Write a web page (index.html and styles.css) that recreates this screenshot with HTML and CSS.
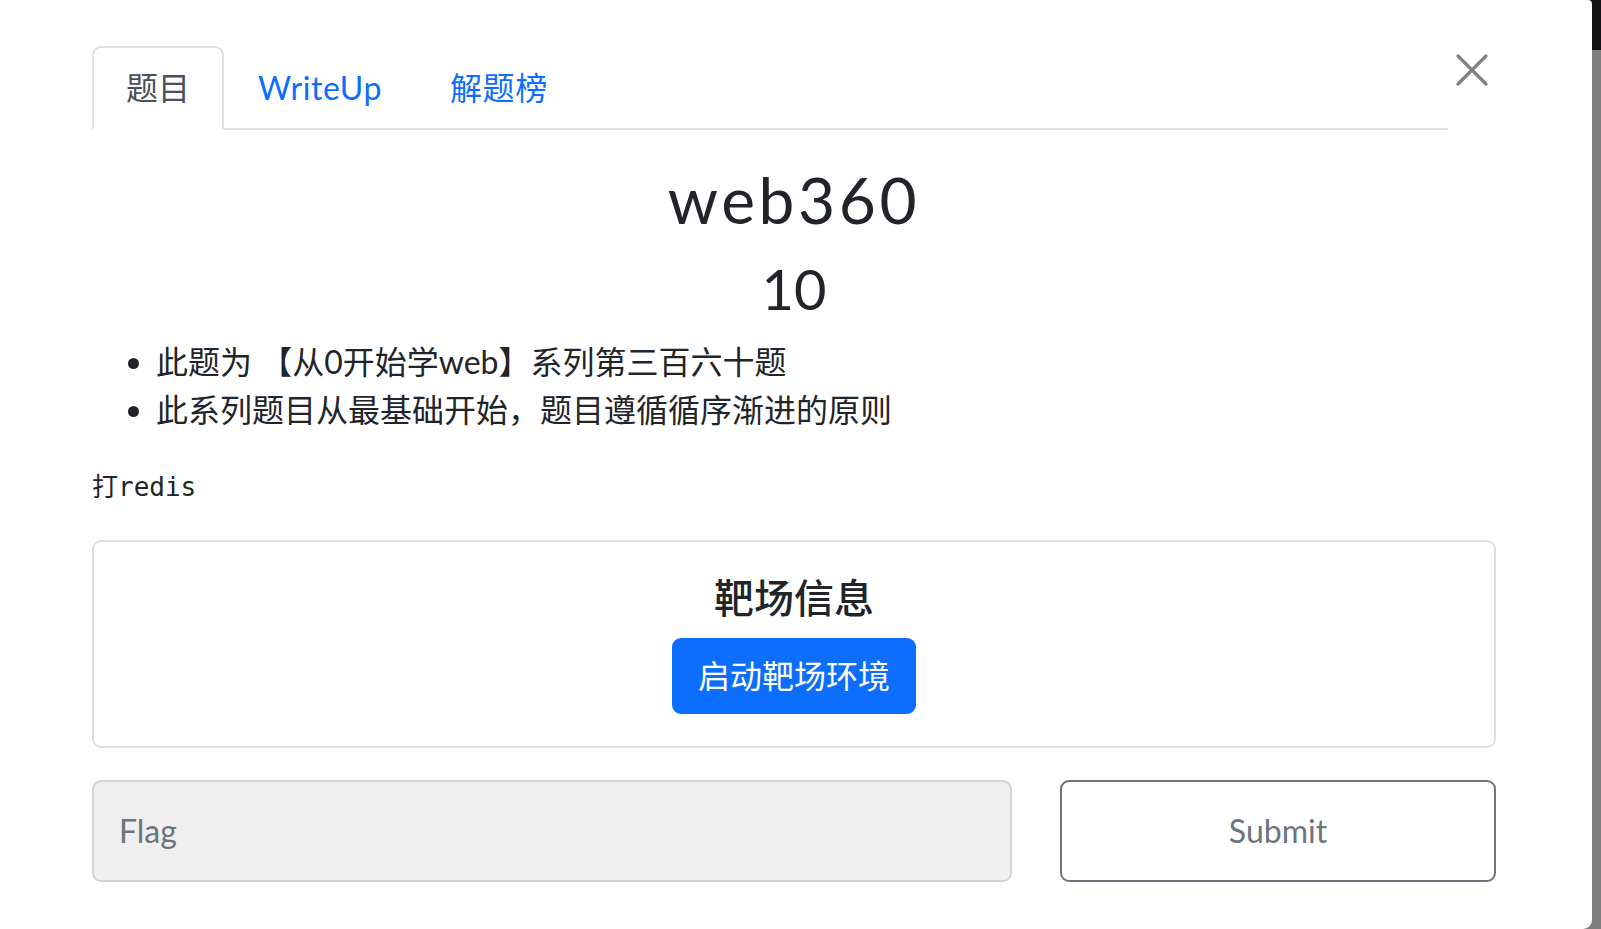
FILE: index.html
```html
<!DOCTYPE html>
<html lang="zh-CN">
<head>
<meta charset="utf-8">
<title>web360</title>
<link rel="stylesheet" href="styles.css">
</head>
<body>
<div class="modal">
  <div class="modal-head">
    <ul class="nav-tabs">
      <li><a class="tab active">题目</a></li>
      <li><a class="tab">WriteUp</a></li>
      <li><a class="tab">解题榜</a></li>
    </ul>
    <button class="btn-close" aria-label="Close">
      <svg viewBox="0 0 32 32" width="32" height="32"><path d="M2 2 L30 30 M30 2 L2 30" stroke="#808080" stroke-width="3.2" stroke-linecap="round" fill="none"/></svg>
    </button>
  </div>
  <div class="tab-content">
    <h2 class="title">web360</h2>
    <h3 class="score">10</h3>
    <ul class="desc">
      <li>此题为 【从0开始学web】系列第三百六十题</li>
      <li>此系列题目从最基础开始，题目遵循循序渐进的原则</li>
    </ul>
    <pre class="hint">打redis</pre>
    <div class="card">
      <h5 class="card-title">靶场信息</h5>
      <button class="btn-primary">启动靶场环境</button>
    </div>
    <div class="flag-row">
      <input class="flag-input" type="text" placeholder="Flag" disabled>
      <button class="btn-submit">Submit</button>
    </div>
  </div>
</div>
<div class="backdrop-strip"></div>
</body>
</html>
```
FILE: styles.css
```css
html, body {
  margin: 0;
  padding: 0;
  height: 100%;
}
body {
  display: flex;
  background: #ffffff;
  font-family: Lato, "Noto Sans CJK SC", sans-serif;
  color: #212529;
  font-size: 32px;
  line-height: 1.5;
  overflow: hidden;
}
.modal {
  width: 1592px;
  height: 929px;
  flex: none;
  box-sizing: border-box;
  padding: 46px 96px 0 92px;
  background: #fff;
  border-top-right-radius: 4px;
  border-bottom-right-radius: 9px;
  position: relative;
  z-index: 1;
}
.backdrop-strip {
  flex: 1;
  margin-left: -10px;
  background: linear-gradient(to bottom, #111315 0, #111315 50px, #7f7f7f 50px, #7f7f7f 100%);
  box-shadow: inset 12px 0 0 -8px #6e6e6e;
}
.modal-head {
  display: flex;
  align-items: flex-start;
}
.nav-tabs {
  flex: 1;
  display: flex;
  list-style: none;
  margin: 0;
  padding: 0;
  border-bottom: 2px solid #dee2e6;
}
.nav-tabs li {
  margin-bottom: -2px;
}
.tab {
  display: block;
  padding: 16px 32px;
  border: 2px solid transparent;
  border-top-left-radius: 9px;
  border-top-right-radius: 9px;
  color: #0d6efd;
  cursor: pointer;
  letter-spacing: 0.6px;
}
.tab.active {
  color: #495057;
  background: #fff;
  border-color: #dee2e6 #dee2e6 #fff;
  letter-spacing: 0;
}
.btn-close {
  width: 48px;
  height: 48px;
  padding: 8px;
  border: 0;
  background: transparent;
  display: flex;
  align-items: center;
  justify-content: center;
  flex: none;
}
.btn-close svg {
  display: block;
}
.tab-content {
  padding-top: 32px;
}
.title {
  margin: 0 0 16px;
  text-align: center;
  font-size: 64px;
  font-weight: 400;
  line-height: 1.2;
  letter-spacing: 3.6px;
}
.score {
  margin: 0 0 16px;
  text-align: center;
  font-size: 56px;
  font-weight: 400;
  line-height: 1.2;
}
.desc {
  margin: 0 0 32px;
  padding-left: 64px;
}
.hint {
  margin: 0 0 32px;
  font-family: "DejaVu Sans Mono", "Noto Sans CJK SC", monospace;
  font-size: 26px;
  line-height: 42px;
  color: #212529;
}
.card {
  border: 2px solid #dfdfdf;
  border-radius: 9px;
  padding: 32px;
  margin-bottom: 32px;
  display: flex;
  flex-direction: column;
  align-items: center;
}
.card-title {
  margin: 0 0 16px;
  font-size: 40px;
  font-weight: 500;
  line-height: 1.2;
}
.btn-primary {
  font-family: Lato, "Noto Sans CJK SC", sans-serif;
  font-size: 32px;
  line-height: 1.5;
  padding: 12px 24px;
  color: #fff;
  background: #0d6efd;
  border: 2px solid #0d6efd;
  border-radius: 9px;
}
.flag-row {
  display: grid;
  grid-template-columns: 920px 436px;
  column-gap: 48px;
}
.flag-input {
  height: 102px;
  box-sizing: border-box;
  padding: 0 25px;
  font-family: Lato, "Noto Sans CJK SC", sans-serif;
  font-size: 32px;
  background: #efefef;
  border: 2px solid #ced4da;
  border-radius: 9px;
  color: #212529;
}
.flag-input::placeholder {
  color: #6c757d;
  opacity: 1;
}
.btn-submit {
  height: 102px;
  box-sizing: border-box;
  font-family: Lato, "Noto Sans CJK SC", sans-serif;
  font-size: 32px;
  color: #6c757d;
  background: #fff;
  border: 2px solid #6c757d;
  border-radius: 9px;
}
```
